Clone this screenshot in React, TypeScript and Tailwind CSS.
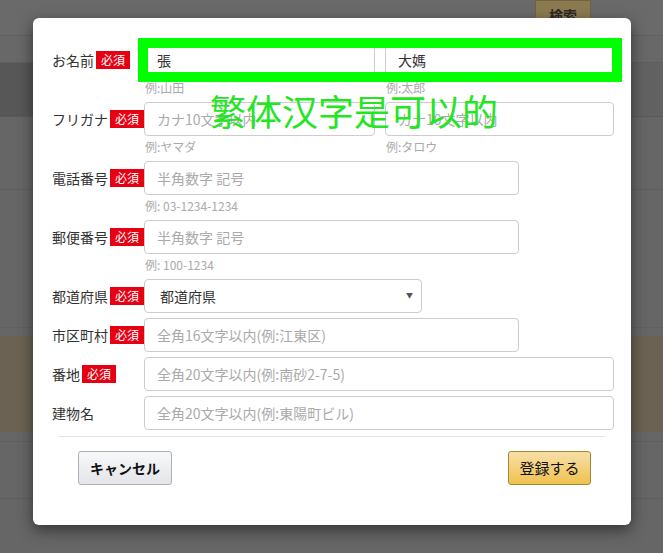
import React from 'react'

type RowProps = {
  label: string
  required?: boolean
  children: React.ReactNode
}

const Badge = () => (
  <span className="ml-[2px] inline-block h-[18px] shrink-0 whitespace-nowrap bg-[#e60012] px-[5px] text-[12px] leading-[18px] text-white">
    必須
  </span>
)

const Hint = ({ children }: { children: React.ReactNode }) => (
  <p className="h-[20px] pl-[1px] text-[12px] leading-[22px] text-[#aaaaaa]">{children}</p>
)

const inputCls =
  'h-[34px] rounded-[4px] border border-[#cccccc] bg-white px-[12px] text-[14px] text-[#333] placeholder:text-[#aaaaaa] outline-none'

const Row = ({ label, required, children }: RowProps) => (
  <div className="flex items-start">
    <div className="flex h-[34px] w-[92px] shrink-0 items-center whitespace-nowrap text-[14px] text-[#333]">
      <span className="shrink-0">{label}</span>
      {required && <Badge />}
    </div>
    <div>{children}</div>
  </div>
)

export default function App() {
  return (
    <div className="relative h-[553px] w-[663px] overflow-hidden bg-[#666666] font-['Noto_Sans_CJK_JP','Noto_Sans_CJK_SC',sans-serif]">
      {/* page behind the overlay */}
      <div className="flex h-[36px] justify-end border-b border-[#606060] bg-[#6a6a6a] pr-[72px]">
        <div className="h-[40px] w-[56px] rounded-b-[2px] border border-[#6f6342] bg-[#8c7b50] pt-[4px] text-center text-[14px] font-bold text-[#2a2a2a]">
          検索
        </div>
      </div>
      <div className="h-[27px] border-b border-[#5e5e5e] bg-[#686868]" />
      <div className="h-[54px] border-b border-[#5a5a5a] bg-gradient-to-r from-[#575757] via-[#5f5f5f] to-[#626262]" />
      <div className="h-[73px] border-b border-[#5f5f5f] bg-[#666666]" />
      <div className="h-[138px] border-b border-[#606060] bg-[#666666]" />
      <div className="h-[8px] bg-[#666666]" />
      <div className="h-[96px] bg-[#6b6253]" />
      <div className="h-[10px] border-b border-[#5f5f5f] bg-[#666666]" />
      <div className="h-[57px] border-b border-[#5f5f5f] bg-[#666666]" />

      {/* modal */}
      <div className="absolute left-[33px] top-[18px] h-[507px] w-[598px] rounded-[6px] bg-white shadow-[0_5px_15px_rgba(0,0,0,0.5)]">
        <form className="flex flex-col gap-[5px] pl-[19px] pt-[25px]">
          <Row label="お名前" required>
            <div className="flex gap-[10px]">
              <div className="w-[231px]">
                <input className={`${inputCls} w-full`} defaultValue="張" />
                <Hint>例:山田</Hint>
              </div>
              <div className="w-[229px]">
                <input className={`${inputCls} w-full`} defaultValue="大媽" />
                <Hint>例:太郎</Hint>
              </div>
            </div>
          </Row>
          <Row label="フリガナ" required>
            <div className="flex gap-[10px]">
              <div className="w-[231px]">
                <input className={`${inputCls} w-full`} placeholder="カナ10文字以内" />
                <Hint>例:ヤマダ</Hint>
              </div>
              <div className="w-[229px]">
                <input className={`${inputCls} w-full`} placeholder="カナ10文字以内" />
                <Hint>例:タロウ</Hint>
              </div>
            </div>
          </Row>
          <Row label="電話番号" required>
            <input className={`${inputCls} w-[375px]`} placeholder="半角数字 記号" />
            <Hint>例: 03-1234-1234</Hint>
          </Row>
          <Row label="郵便番号" required>
            <input className={`${inputCls} w-[375px]`} placeholder="半角数字 記号" />
            <Hint>例: 100-1234</Hint>
          </Row>
          <Row label="都道府県" required>
            <div className="relative w-[278px]">
              <select className={`${inputCls} w-full appearance-none pl-[15px]`} defaultValue="">
                <option value="">都道府県</option>
              </select>
              <span className="pointer-events-none absolute right-[9px] top-[11px] text-[7px] text-[#555]">▼</span>
            </div>
          </Row>
          <Row label="市区町村" required>
            <input className={`${inputCls} w-[375px]`} placeholder="全角16文字以内(例:江東区)" />
          </Row>
          <Row label="番地" required>
            <input className={`${inputCls} w-[470px]`} placeholder="全角20文字以内(例:南砂2-7-5)" />
          </Row>
          <Row label="建物名">
            <input className={`${inputCls} w-[470px]`} placeholder="全角20文字以内(例:東陽町ビル)" />
          </Row>
        </form>

        <div className="ml-[25px] mr-[26px] mt-[6px] border-t border-[#e5e5e5]" />

        <div className="mt-[14px] flex justify-between pl-[45px] pr-[40px]">
          <button className="h-[34px] w-[94px] rounded-[3px] border border-[#adb1b8] bg-gradient-to-b from-[#f7f8fa] to-[#e3e5e8] text-[14px] font-bold text-[#111]">
            キャンセル
          </button>
          <button className="h-[34px] w-[83px] rounded-[3px] border border-[#a88734] bg-gradient-to-b from-[#f7dfa5] to-[#f0c14b] text-[15px] text-[#111]">
            登録する
          </button>
        </div>

        {/* screenshot annotation */}
        <div className="pointer-events-none absolute left-[105px] top-[20px] h-[44px] w-[484px] border-[10px] border-[#00ff00]" />
        <p className="pointer-events-none absolute left-[177px] top-[72px] font-['Noto_Sans_CJK_SC',sans-serif] text-[36px] leading-[40px] text-[#22e622]">
          繁体汉字是可以的
        </p>
      </div>
    </div>
  )
}
